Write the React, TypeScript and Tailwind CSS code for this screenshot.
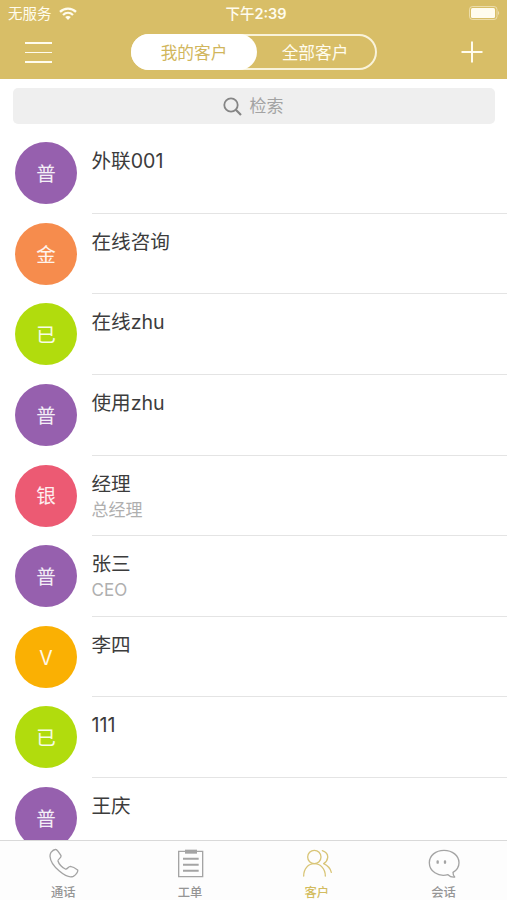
import type { ReactNode } from 'react'
import clsx from 'clsx'

type Customer = {
  level: string
  color: string
  name: string
  title?: string
}

const customers: Customer[] = [
  { level: '普', color: 'bg-[#9660ae]', name: '外联001' },
  { level: '金', color: 'bg-[#f68c4d]', name: '在线咨询' },
  { level: '已', color: 'bg-[#b1dc0d]', name: '在线zhu' },
  { level: '普', color: 'bg-[#9660ae]', name: '使用zhu' },
  { level: '银', color: 'bg-[#ec5a73]', name: '经理', title: '总经理' },
  { level: '普', color: 'bg-[#9660ae]', name: '张三', title: 'CEO' },
  { level: 'V', color: 'bg-[#fab003]', name: '李四' },
  { level: '已', color: 'bg-[#b1dc0d]', name: '111' },
  { level: '普', color: 'bg-[#9660ae]', name: '王庆' },
]

function TabIcon({ children }: { children: ReactNode }) {
  return (
    <svg
      viewBox="0 0 96 96"
      className="size-8 opacity-85"
      fill="none"
      stroke="currentColor"
      strokeWidth="4"
      strokeLinecap="round"
      strokeLinejoin="round"
    >
      {children}
    </svg>
  )
}

const tabs = [
  {
    label: '通话',
    icon: (
      <TabIcon>
        <path d="M12 13C17 7 23 3 28 5C33 8 38 17 42 23C44 29 32 34 33 39C35 47 45 59 55 63C61 65 64 55 70 55C77 56 87 62 92 66C94 71 86 81 79 85C67 90 51 81 37 69C22 57 10 41 9 25C9 20 10 16 12 13Z" />
      </TabIcon>
    ),
  },
  {
    label: '工单',
    icon: (
      <TabIcon>
        <path d="M14 10H86V86H14Z" strokeLinejoin="miter" />
        <path d="M33 11H69" strokeWidth="12" strokeLinecap="butt" />
        <path d="M27 32H74M27 50H74M27 68H74" strokeWidth="6" strokeLinecap="butt" />
      </TabIcon>
    ),
  },
  {
    label: '客户',
    active: true,
    icon: (
      <TabIcon>
        <circle cx="40" cy="27" r="20" />
        <path d="M8 84C8 62 22 47 40 47S73 62 73 84" />
        <path d="M64 8C76 12 81 20 80 29C79 37 75 43 68 47C79 52 88 61 91 73" />
      </TabIcon>
    ),
  },
  {
    label: '会话',
    icon: (
      <TabIcon>
        <path d="M60 80C30 88 4 69 4 44C4 23 23 7 48 7S93 23 93 44C93 55 87 66 75 73C75 79 77 84 80 87C72 88 65 85 60 80Z" />
        <path d="M29 40V44M51 40V44" strokeWidth="7" />
      </TabIcon>
    ),
  },
]

function StatusBar() {
  return (
    <div className="grid h-[26px] grid-cols-3 items-center pr-[7px] pl-2 text-[14.5px] leading-none">
      <div className="flex items-center gap-[7px]">
        <span className="pt-0.5">无服务</span>
        <svg viewBox="0 0 18 13" className="h-[13px] w-[18px]" fill="none" stroke="currentColor" strokeWidth="2.3">
          <path d="M1 4.8C5.5 0.5 12.5 0.5 17 4.8" />
          <path d="M4 8C7 5.2 11 5.2 14 8" />
          <path d="M6.2 10.1C7.8 8.7 10.2 8.7 11.8 10.1L9 12.9Z" fill="currentColor" stroke="none" />
        </svg>
      </div>
      <span className="pt-0.5 pl-1 text-center font-medium whitespace-nowrap">
        下午<span className="font-semibold">2:39</span>
      </span>
      <svg viewBox="0 0 31 14" className="h-3.5 w-[31px] justify-self-end" fill="currentColor">
        <rect x="0.5" y="0.5" width="27.5" height="13" rx="3" fill="none" stroke="currentColor" opacity="0.5" />
        <rect x="2" y="2" width="24" height="10" rx="1.5" />
        <path d="M29 5C30.6 5.6 30.6 8.4 29 9Z" opacity="0.5" />
      </svg>
    </div>
  )
}

function Header() {
  return (
    <header className="h-[79px] shrink-0 bg-[#d8be67] text-[#fffcee]">
      <StatusBar />
      <div className="flex items-center pr-6 pl-[25px] pt-2">
        <button className="flex w-[27px] flex-col gap-2 pt-px" aria-label="菜单">
          <span className="h-[1.5px] bg-current" />
          <span className="h-[1.5px] bg-current" />
          <span className="h-[1.5px] bg-current" />
        </button>
        <div className="ml-[79px] flex h-9 w-[246px] rounded-full border-2 border-current/85 text-[16.7px] leading-none">
          <button className="-m-0.5 w-[126px] rounded-full bg-white pt-0.5 text-[#d1b65c]">我的客户</button>
          <button className="flex-1 pt-0.5">全部客户</button>
        </div>
        <button className="ml-auto" aria-label="新增">
          <svg viewBox="0 0 22 22" className="size-[22px]" stroke="currentColor" strokeWidth="2">
            <path d="M11 0.5V21.5M0.5 11H21.5" />
          </svg>
        </button>
      </div>
    </header>
  )
}

function SearchBar() {
  return (
    <div className="shrink-0 pt-[9px] pr-3 pb-[9px] pl-[13px]">
      <div className="flex h-9 items-center justify-center gap-2 rounded-[5px] bg-[#efefef] pr-0.5 text-[17px] text-[#a3a3a3]">
        <svg viewBox="0 0 19 19" className="size-[19px]" fill="none" stroke="#858585" strokeWidth="1.8">
          <circle cx="8" cy="8" r="6.7" />
          <path d="M12.8 12.8L18 18" strokeWidth="2.2" />
        </svg>
        <span className="pt-0.5">检索</span>
      </div>
    </div>
  )
}

function CustomerRow({ level, color, name, title }: Customer) {
  return (
    <li className="flex h-[80.65px] shrink-0 gap-[14.5px] pl-[15px]">
      <div
        className={clsx(
          'mt-[9px] flex size-[62px] shrink-0 items-center justify-center rounded-full pt-[3px] text-[19.5px] text-white/90',
          color,
        )}
      >
        {level}
      </div>
      <div className="flex-1 border-b border-[#e4e4e4] pt-3.5">
        <p className="text-[19.6px] leading-[28px] text-[#3c3c3c]">{name}</p>
        {title && <p className="text-[17px] leading-[24px] text-[#afafaf]">{title}</p>}
      </div>
    </li>
  )
}

function TabBar() {
  return (
    <nav className="grid h-[60px] shrink-0 grid-cols-4 border-t border-[#d9d9d9] bg-[#fdfdfd]">
      {tabs.map((tab) => (
        <button
          key={tab.label}
          className={clsx(
            'flex flex-col items-center pt-[7px] text-[12.3px] leading-[20px]',
            tab.active ? 'text-[#d3bc60]' : 'text-[#959595]',
          )}
        >
          {tab.icon}
          <span className="mt-[3px] font-medium">{tab.label}</span>
        </button>
      ))}
    </nav>
  )
}

export default function App() {
  return (
    <div className="flex h-[900px] w-[507px] flex-col overflow-hidden bg-white font-[Inter,'Noto_Sans_CJK_SC',sans-serif]">
      <Header />
      <SearchBar />
      <ul className="flex min-h-0 flex-1 flex-col overflow-hidden">
        {customers.map((customer) => (
          <CustomerRow key={customer.name} {...customer} />
        ))}
      </ul>
      <TabBar />
    </div>
  )
}
